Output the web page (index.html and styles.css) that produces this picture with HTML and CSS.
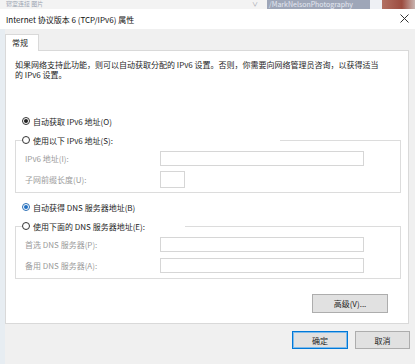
FILE: index.html
```html
<!DOCTYPE html>
<html lang="zh-CN">
<head>
    <meta charset="UTF-8">
    <title>Internet 协议版本 6 (TCP/IPv6) 属性</title>
    <link rel="stylesheet" href="styles.css">
</head>
<body>
    <div class="strip">
        <div class="strip-left"><span>寝室连接 图片</span></div>
        <div class="strip-chev">∨</div>
        <div class="strip-photo"><span>/MarkNelsonPhotography</span></div>
        <div class="strip-gap"></div>
        <div class="strip-red"></div>
    </div>

    <div class="titlebar">
        <span class="title">Internet 协议版本 6 (TCP/IPv6) 属性</span>
        <svg class="close" width="9" height="9" viewBox="0 0 9 9">
            <path d="M0.5 0.5 L8.5 8.5 M8.5 0.5 L0.5 8.5" stroke="#333" stroke-width="1" fill="none"/>
        </svg>
    </div>

    <div class="dialog">
        <div class="tabs">
            <div class="tab">常规</div>
        </div>
        <div class="panel">
            <p class="intro">如果网络支持此功能，则可以自动获取分配的 IPv6 设置。否则，你需要向网络管理员咨询，以获得适当<br>的 IPv6 设置。</p>

            <div class="radio-row first">
                <span class="radio checked"></span>自动获取 IPv6 地址(O)
            </div>
            <fieldset class="group">
                <legend class="legend wide">
                    <span class="radio"></span>使用以下 IPv6 地址(S):
                </legend>
                <div class="field">
                    <label>IPv6 地址(I):</label>
                    <div class="input"></div>
                </div>
                <div class="field">
                    <label>子网前缀长度(U):</label>
                    <div class="input small"></div>
                </div>
            </fieldset>

            <div class="radio-row">
                <span class="radio checked blue"></span>自动获得 DNS 服务器地址(B)
            </div>
            <fieldset class="group dns">
                <legend class="legend">
                    <span class="radio"></span>使用下面的 DNS 服务器地址(E):
                </legend>
                <div class="field">
                    <label>首选 DNS 服务器(P):</label>
                    <div class="input"></div>
                </div>
                <div class="field">
                    <label>备用 DNS 服务器(A):</label>
                    <div class="input"></div>
                </div>
            </fieldset>

            <div class="advanced-row">
                <button class="btn advanced">高级(V)...</button>
            </div>
        </div>
        <div class="footer">
            <button class="btn ok">确定</button>
            <button class="btn">取消</button>
        </div>
    </div>
</body>
</html>
```

FILE: styles.css
```css
*{
    box-sizing: border-box;
}
body{
    margin: 0;
    width: 415px;
    height: 364px;
    overflow: hidden;
    background: #f0f0f0;
    font-family: "Noto Sans CJK SC", "Noto Sans", sans-serif;
    font-size: 8px;
    color: #1e1e1e;
}

/* blurred window behind the dialog */
.strip{
    display: flex;
    height: 9px;
    overflow: hidden;
    background: #f3f3f3;
}
.strip-left{
    width: 252px;
    padding-left: 6px;
    color: #9aa3b1;
    font-size: 6px;
    line-height: 8px;
}
.strip-chev{
    width: 15px;
    color: #9aa0a8;
    font-size: 6px;
    line-height: 8px;
}
.strip-photo{
    width: 103px;
    background: #9ea6b8;
    color: #e4e8f2;
    font-size: 7px;
    line-height: 9px;
    padding-left: 2px;
    white-space: nowrap;
}
.strip-gap{
    width: 12px;
    background: #eef0f4;
}
.strip-red{
    flex: 1;
    background: linear-gradient(90deg, #b27062, #9c4c40 60%, #c9b4b0);
}

/* title bar */
.titlebar{
    display: flex;
    justify-content: space-between;
    align-items: center;
    height: 20px;
    padding: 0 6px 0 6px;
    background: #fff;
}
.title{
    font-size: 8px;
    color: #111;
}
.close{
    margin-top: -2px;
}

/* dialog body */
.dialog{
    height: 335px;
    border-left: 5px solid #e7edf2;
    padding-top: 5px;
}
.tabs{
    display: flex;
    height: 16px;
}
.tab{
    width: 34px;
    height: 17px;
    background: #fff;
    border: 1px solid #d9d9d9;
    border-bottom: none;
    padding: 2px 0 0 6px;
    position: relative;
    z-index: 1;
}
.panel{
    width: 404px;
    background: #fff;
    border: 1px solid #d9d9d9;
    padding: 9px 8px 10px 9px;
}
.intro{
    margin: 0;
    line-height: 10px;
    white-space: nowrap;
}

.radio-row{
    display: flex;
    align-items: center;
    height: 10px;
    margin-top: 9px;
    padding-left: 7px;
}
.radio-row.first{
    margin-top: 36px;
}
.radio{
    width: 8px;
    height: 8px;
    border: 1px solid #333;
    border-radius: 50%;
    margin-right: 3px;
    background: #fff;
    flex-shrink: 0;
    display: flex;
    justify-content: center;
    align-items: center;
}
.radio.checked::after{
    content: "";
    width: 4px;
    height: 4px;
    border-radius: 50%;
    background: #222;
}
.radio.blue{
    border-color: #2b6fb5;
}
.radio.blue::after{
    background: #1f6fc4;
}

.group{
    margin: 9px 0 0 0;
    width: 386px;
    border: 1px solid #dcdcdc;
    padding: 0 0 5px 9px;
}
.legend{
    display: flex;
    align-items: center;
    height: 10px;
    width: 163px;
    padding: 0;
    margin-left: -3px;
}
.legend.wide{
    width: 258px;
}
.field{
    display: flex;
    align-items: center;
    height: 15px;
    margin-top: 6px;
}
.field label{
    width: 135px;
    color: #9a9a9a;
}
.input{
    width: 204px;
    height: 15px;
    border: 1px solid #d6d6d6;
    background: #fff;
}
.input.small{
    width: 25px;
    height: 17px;
}

.advanced-row{
    display: flex;
    justify-content: flex-end;
    margin-top: 15px;
    padding-right: 12px;
}
.btn{
    font-family: inherit;
    font-size: 8px;
    color: #1e1e1e;
    width: 55px;
    height: 18px;
    padding: 0;
    background: #e1e1e1;
    border: 1px solid #adadad;
}
.btn.advanced{
    width: 76px;
    height: 19px;
}
.footer{
    display: flex;
    justify-content: flex-end;
    gap: 7px;
    padding: 7px 5px 0 0;
}
.btn.ok{
    width: 56px;
    border: 1px solid #0078d7;
    box-shadow: inset 0 0 0 1px #7fbbeb;
}
```
